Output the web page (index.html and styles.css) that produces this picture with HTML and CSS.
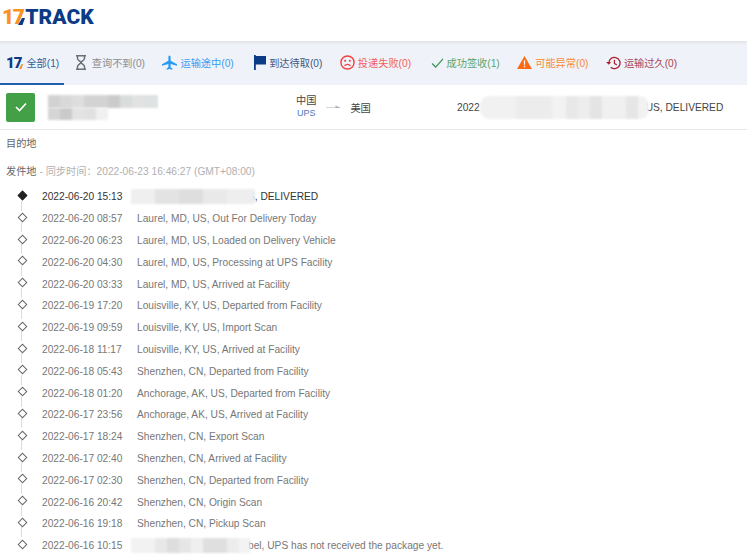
FILE: index.html
```html
<!DOCTYPE html>
<html lang="zh">
<head>
    <meta charset="UTF-8">
    <meta name="viewport" content="width=device-width, initial-scale=1.0">
    <title>17TRACK</title>
    <link rel="stylesheet" href="styles.css">
</head>
<body>

    <header class="top-bar">
        <div class="logo">
            <span class="logo-num">17</span>
            <svg class="logo-cut" width="7" height="7" viewBox="0 0 7 7"><path d="M4 0h3L4.500 7H0z" fill="#0c3b85"/></svg>
            <span class="logo-word">TRACK</span>
        </div>
    </header>

    <nav class="tabs">
        <a class="tab tab-active">
            <span class="tab-mark">17</span>
            <svg class="mark-cut" width="4" height="5" viewBox="0 0 4 5"><path d="M2.500 0H4L2.500 5H0z" fill="#f7931e"/></svg>
            <span class="tab-all">全部(1)</span>
        </a>
        <a class="tab tab-grey">
            <svg class="icon icon-glass" width="10" height="15" viewBox="0 0 10 15"><path d="M0 .8h10M0 14.200h10M1.500 1v2.500c0 2 3.500 3 3.500 4s-3.500 2-3.500 4V14M8.500 1v2.500c0 2-3.500 3-3.500 4s3.500 2 3.500 4V14" fill="none" stroke="#6b6f76" stroke-width="1.500"/></svg>
            查询不到(0)
        </a>
        <a class="tab tab-blue">
            <svg class="icon" width="15" height="16" viewBox="0 0 16 16"><path d="M8 0c.8 0 1.200 1 1.200 2v3.600L16 9.400v1.500L9.200 9v3.600l2 1.400v1.200L8 14.400l-3.200.8V14l2-1.400V9L0 10.900V9.400l6.800-3.800V2C6.800 1 7.200 0 8 0z" fill="#2b9af3"/></svg>
            运输途中(0)
        </a>
        <a class="tab tab-navy">
            <svg class="icon" width="12" height="15" viewBox="0 0 12 15"><path d="M0 0h1.800v15H0zM1.800 1H12v8.500H1.800z" fill="#0c3b85"/></svg>
            到达待取(0)
        </a>
        <a class="tab tab-red">
            <svg class="icon" width="15" height="15" viewBox="0 0 16 16"><circle cx="8" cy="8" r="7" fill="none" stroke="#f2413f" stroke-width="1.500"/><circle cx="5.500" cy="6.200" r="1.100" fill="#f2413f"/><circle cx="10.500" cy="6.200" r="1.100" fill="#f2413f"/><path d="M4.800 11.500c1.500-2 4.900-2 6.400 0" fill="none" stroke="#f2413f" stroke-width="1.400"/></svg>
            投递失败(0)
        </a>
        <a class="tab tab-green">
            <svg class="icon" width="13" height="10" viewBox="0 0 14 11"><path d="M1 6l4 4 8-9" fill="none" stroke="#3f9a57" stroke-width="1.500"/></svg>
            成功签收(1)
        </a>
        <a class="tab tab-orange">
            <svg class="icon" width="15" height="13" viewBox="0 0 16 14"><path d="M8 0l8 14H0z" fill="#fb6a10"/><path d="M7.300 4.500h1.400v5H7.300zM7.300 10.500h1.400v1.500H7.300z" fill="#fff"/></svg>
            可能异常(0)
        </a>
        <a class="tab tab-maroon">
            <svg class="icon" width="15" height="14" viewBox="0 0 16 15"><path d="M3 7.500a6 6 0 1 1 2 4.500" fill="none" stroke="#a8212f" stroke-width="1.400"/><path d="M0 6.500h5.500L3 9.500z" fill="#a8212f"/><path d="M9 4v4l2.500 1.500" fill="none" stroke="#a8212f" stroke-width="1.300"/></svg>
            运输过久(0)
        </a>
    </nav>

    <section class="summary">
        <div class="status-box">
            <svg width="12" height="10" viewBox="0 0 12 10"><path d="M1 5l3.500 3.500L11 1.500" fill="none" stroke="#fff" stroke-width="1.600"/></svg>
        </div>
        <div class="number-cell"><div class="mosaic mosaic-a"></div><div class="mosaic mosaic-b"></div></div>
        <div class="route">
            <div class="route-from">中国<span class="carrier">UPS</span></div>
            <svg class="route-arrow" width="15" height="5" viewBox="0 0 15 5"><path d="M0 2.500h9.500V.5L15 3H0z" fill="#b0b0b0"/></svg>
            <div class="route-to">美国</div>
        </div>
        <div class="latest">2022<div class="mosaic mosaic-c"></div><span class="latest-end">US, DELIVERED</span></div>
    </section>

    <div class="labels">
        <div class="label-dest">目的地</div>
        <div class="label-origin">发件地 <span class="sync">- 同步时间：2022-06-23 16:46:27 (GMT+08:00)</span></div>
    </div>

    <ul class="timeline">
        <li class="event event-first"><span class="time">2022-06-20 15:13</span><span class="place place-masked"><span class="mosaic mosaic-d"></span><span class="masked-end">S, DELIVERED</span></span></li>
        <li class="event"><span class="time">2022-06-20 08:57</span><span class="place">Laurel, MD, US, Out For Delivery Today</span></li>
        <li class="event"><span class="time">2022-06-20 06:23</span><span class="place">Laurel, MD, US, Loaded on Delivery Vehicle</span></li>
        <li class="event"><span class="time">2022-06-20 04:30</span><span class="place">Laurel, MD, US, Processing at UPS Facility</span></li>
        <li class="event"><span class="time">2022-06-20 03:33</span><span class="place">Laurel, MD, US, Arrived at Facility</span></li>
        <li class="event"><span class="time">2022-06-19 17:20</span><span class="place">Louisville, KY, US, Departed from Facility</span></li>
        <li class="event"><span class="time">2022-06-19 09:59</span><span class="place">Louisville, KY, US, Import Scan</span></li>
        <li class="event"><span class="time">2022-06-18 11:17</span><span class="place">Louisville, KY, US, Arrived at Facility</span></li>
        <li class="event"><span class="time">2022-06-18 05:43</span><span class="place">Shenzhen, CN, Departed from Facility</span></li>
        <li class="event"><span class="time">2022-06-18 01:20</span><span class="place">Anchorage, AK, US, Departed from Facility</span></li>
        <li class="event"><span class="time">2022-06-17 23:56</span><span class="place">Anchorage, AK, US, Arrived at Facility</span></li>
        <li class="event"><span class="time">2022-06-17 18:24</span><span class="place">Shenzhen, CN, Export Scan</span></li>
        <li class="event"><span class="time">2022-06-17 02:40</span><span class="place">Shenzhen, CN, Arrived at Facility</span></li>
        <li class="event"><span class="time">2022-06-17 02:30</span><span class="place">Shenzhen, CN, Departed from Facility</span></li>
        <li class="event"><span class="time">2022-06-16 20:42</span><span class="place">Shenzhen, CN, Origin Scan</span></li>
        <li class="event"><span class="time">2022-06-16 19:18</span><span class="place">Shenzhen, CN, Pickup Scan</span></li>
        <li class="event"><span class="time">2022-06-16 10:15</span><span class="place place-masked"><span class="mosaic mosaic-e"></span><span class="masked-end">bel, UPS has not received the package yet.</span></span></li>
    </ul>

</body>
</html>
```

FILE: styles.css
```css
* {
    box-sizing: border-box;
}
html, body {
    height: 100%;
    overflow: hidden;
}
body {
    font-family: "Liberation Sans", "Noto Sans CJK SC", sans-serif;
    font-size: 10.2px;
    margin: 0;
    background-color: #ffffff;
    color: #555;
}
.top-bar {
    height: 41px;
    padding: 3px 0 0 2px;
    background: #fff;
}
.logo {
    display: flex;
    align-items: center;
    height: 27px;
    font-family: Roboto, "Liberation Sans", sans-serif;
    font-weight: 900;
    font-size: 21px;
    color: #0c3b85;
}
.logo-num {
    color: #f7931e;
    letter-spacing: -1.5px;
}
.logo-cut {
    margin: 10px 0 0 -5px;
}
.logo-word {
    margin-left: 0;
}
.tabs {
    height: 44px;
    display: flex;
    align-items: center;
    background-color: #eff2f9;
    border-top: 1px solid #e3e5ea;
    box-shadow: inset 0 2px 2px -1px #e2e4e9;
}
.tab {
    width: 88.700px;
    height: 100%;
    display: flex;
    align-items: center;
    justify-content: flex-end;
    gap: 3px;
    padding-right: 7.700px;
    padding-bottom: 2px;
    white-space: nowrap;
}
.tab-active {
    width: 64px;
    justify-content: flex-start;
    gap: 0;
    padding-left: 6px;
    padding-right: 0;
    padding-bottom: 0;
    border-bottom: 2px solid #1f5fae;
}
.tab-mark {
    font-family: Roboto, "Liberation Sans", sans-serif;
    font-weight: 900;
    font-size: 15px;
    letter-spacing: -1px;
    color: #0c3b85;
}
.mark-cut {
    margin: 7px 3px 0 -2px;
}
.tab-all {
    color: #2f5f9e;
}
.tab-grey {
    color: #8a8d93;
}
.tab-blue {
    color: #3d9cf0;
}
.tab-navy {
    color: #44587d;
}
.tab-red {
    color: #f25f5f;
}
.tab-green {
    color: #5aa56f;
}
.tab-orange {
    color: #f68a3c;
}
.tab-maroon {
    color: #a94452;
}
.icon {
    flex: none;
}
.icon-glass {
    margin-right: 3px;
}
.summary {
    height: 45px;
    display: flex;
    align-items: center;
    padding-left: 6px;
    border-bottom: 1px solid #e6e6e6;
}
.status-box {
    width: 29px;
    height: 29px;
    flex: none;
    display: flex;
    align-items: center;
    justify-content: center;
    background-color: #43a047;
    border-radius: 2px;
}
.number-cell {
    width: 261px;
    padding-left: 13px;
}
.mosaic {
    display: block;
    filter: blur(1px);
}
.mosaic-a {
    width: 110px;
    height: 13px;
    background: linear-gradient(90deg, #d2d2d2 0 12px, #d9d9d9 12px 24px, #dedede 24px 36px, #d3d3d3 36px 60px, #cbcbcb 60px 72px, #dadddd 72px 84px, #e2e2e2 84px 96px, #dfe2e2 96px);
}
.mosaic-b {
    width: 60px;
    height: 12px;
    background: linear-gradient(90deg, #d5d5d5 0 12px, #cacaca 12px 24px, #e3e3e3 24px 36px, #e1e1e1 36px 48px, #f0f0f0 48px);
}
.route {
    display: flex;
    align-items: center;
    width: 161px;
}
.route-from {
    display: flex;
    flex-direction: column;
    align-items: center;
    color: #444;
    line-height: 13px;
}
.carrier {
    color: #4a78b8;
    font-size: 9px;
}
.route-arrow {
    margin: 0 9px 0 10px;
}
.route-to {
    color: #444;
}
.latest {
    display: flex;
    align-items: center;
    color: #444;
}
.mosaic-c {
    width: 169px;
    height: 23px;
    flex: none;
    border-radius: 9px;
    background: linear-gradient(90deg, #f1f1f1 0 36px, #ececec 36px 72px, #f2f2f2 72px 86px, #e8e8e8 86px 98px, #ededed 98px 110px, #e4e4e4 110px 122px, #f0f0f0 122px 146px, #e6e6e6 146px 158px, #f2f2f2 158px);
}
.latest-end {
    margin-left: -3px;
}
.labels {
    padding: 7px 6px 0;
    line-height: 14px;
    color: #666;
}
.label-origin {
    margin-top: 14px;
}
.sync {
    color: #b0b0b0;
}
.timeline {
    list-style: none;
    margin: 7px 0 0;
    padding: 0;
}
.event {
    height: 21.800px;
    display: flex;
    align-items: center;
    padding-left: 42px;
    color: #777;
    position: relative;
}
.event::before {
    content: "";
    position: absolute;
    left: 19px;
    top: 6px;
    width: 5px;
    height: 5px;
    background: #fff;
    border: 1px solid #666;
    transform: rotate(45deg);
}
.event::after {
    content: "";
    position: absolute;
    left: 21px;
    top: 14.500px;
    width: 1px;
    height: 10px;
    background: #dcdcdc;
}
.event:last-child::after {
    display: none;
}
.event-first {
    color: #333;
}
.event-first::before {
    background: #222;
    border-color: #222;
}
.time {
    width: 95px;
    flex: none;
}
.place-masked {
    display: flex;
    align-items: center;
}
.mosaic-d {
    width: 124px;
    height: 15px;
    margin-left: -6px;
    flex: none;
    background: linear-gradient(90deg, #efefef 0 24px, #e3e3e3 24px 48px, #dedede 48px 72px, #e9e9e9 72px 96px, #eeeeee 96px);
}
.mosaic-e {
    width: 119px;
    height: 15px;
    margin-left: -6px;
    flex: none;
    background: linear-gradient(90deg, #f2f2f2 0 24px, #e8e8e8 24px 36px, #dddddd 36px 48px, #e6e6e6 48px 60px, #efefef 60px 72px, #dfdfdf 72px 96px, #ececec 96px 108px, #f3f3f3 108px);
}
.masked-end {
    margin-left: -7px;
}
.mosaic-e + .masked-end {
    margin-left: -2px;
}
```
